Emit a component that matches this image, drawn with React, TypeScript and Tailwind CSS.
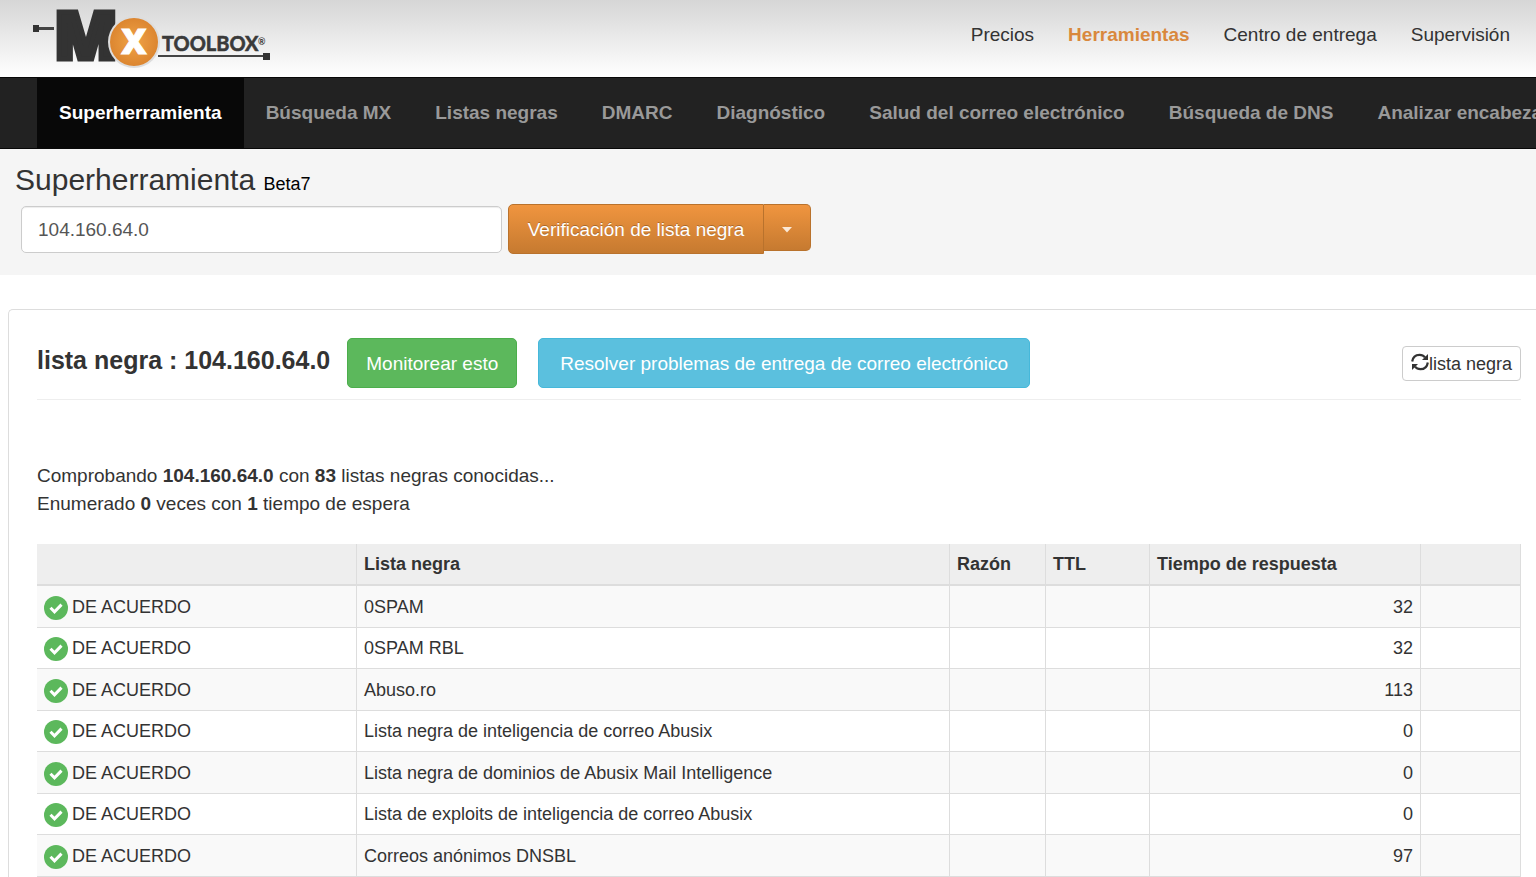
import { clsx } from 'clsx'

interface BlacklistRow {
  name: string
  time: number
}

const TOP_LINKS = ['Precios', 'Herramientas', 'Centro de entrega', 'Supervisión']

const TOOLS = [
  'Superherramienta',
  'Búsqueda MX',
  'Listas negras',
  'DMARC',
  'Diagnóstico',
  'Salud del correo electrónico',
  'Búsqueda de DNS',
  'Analizar encabezados',
]

const ROWS: BlacklistRow[] = [
  { name: '0SPAM', time: 32 },
  { name: '0SPAM RBL', time: 32 },
  { name: 'Abuso.ro', time: 113 },
  { name: 'Lista negra de inteligencia de correo Abusix', time: 0 },
  { name: 'Lista negra de dominios de Abusix Mail Intelligence', time: 0 },
  { name: 'Lista de exploits de inteligencia de correo Abusix', time: 0 },
  { name: 'Correos anónimos DNSBL', time: 97 },
]

function Logo() {
  return (
    <svg width="240" height="62" viewBox="0 0 240 62" role="img" aria-label="MxToolbox">
      <defs>
        <radialGradient id="ball" cx="50%" cy="50%" r="50%">
          <stop offset="0%" stopColor="#f0a347" />
          <stop offset="100%" stopColor="#dc8630" />
        </radialGradient>
      </defs>
      <rect x="0" y="17" width="6" height="7" fill="#333" />
      <rect x="6" y="19" width="15" height="3" fill="#444" />
      <text
        x="21"
        y="51"
        fontFamily="'Open Sans', sans-serif"
        fontWeight="800"
        fontSize="66"
        fill="#333"
        stroke="#333"
        strokeWidth="5"
      >
        M
      </text>
      <circle cx="101" cy="34" r="26" fill="#ddd" />
      <circle cx="101" cy="34" r="24" fill="url(#ball)" />
      <text
        x="101"
        y="46"
        textAnchor="middle"
        fontFamily="'Open Sans', sans-serif"
        fontWeight="800"
        fontSize="35"
        fill="#fff"
        stroke="#fff"
        strokeWidth="1"
      >
        X
      </text>
      <text x="129" y="43" fontFamily="Lato, sans-serif" fontWeight="700" fontSize="20" fill="#3a3a3a" stroke="#3a3a3a" strokeWidth="0.6">
        TOOLBOX
      </text>
      <text x="225" y="37" fontFamily="Lato, sans-serif" fontWeight="700" fontSize="9" fill="#3a3a3a">
        ®
      </text>
      <rect x="125" y="47" width="106" height="2" fill="#444" />
      <rect x="230" y="45" width="7" height="7" fill="#333" />
    </svg>
  )
}

function CheckIcon() {
  return (
    <svg width="24" height="24" viewBox="0 0 24 24" className="mt-[2px] shrink-0" aria-hidden="true">
      <circle cx="12" cy="12" r="12" fill="#5cb85c" />
      <path d="M6.5 11.8l4 4 7-7.2" fill="none" stroke="#fff" strokeWidth="3" />
    </svg>
  )
}

function RefreshIcon() {
  return (
    <svg width="18" height="18" viewBox="0 0 18 18" className="mb-1 shrink-0" aria-hidden="true">
      <g fill="none" stroke="#333" strokeWidth="2.2">
        <path d="M1.2 8.5C1.8 4 5 1.8 8.6 1.8c2.4 0 4.2 1 5.4 2.6" />
        <path d="M16.8 9.5C16.2 14 13 16.2 9.4 16.2c-2.4 0-4.2-1-5.4-2.6" />
      </g>
      <path d="M17 1v6h-6z" fill="#333" />
      <path d="M1 17v-6h6z" fill="#333" />
    </svg>
  )
}

function Header() {
  return (
    <header className="flex h-[77px] items-center justify-between bg-linear-to-b from-[#d6d6d6] to-white pr-[26px] pl-[33px]">
      <a href="#">
        <Logo />
      </a>
      <nav className="flex gap-[34px] pb-2">
        {TOP_LINKS.map((label) => (
          <a
            key={label}
            href="#"
            className={clsx(label === 'Herramientas' ? 'font-bold text-[#d9883d]' : 'text-[#333]')}
          >
            {label}
          </a>
        ))}
      </nav>
    </header>
  )
}

function ToolNav() {
  return (
    <nav className="flex h-[72px] overflow-hidden border-y border-[#080808] bg-[#222] pl-[37px]">
      {TOOLS.map((label, i) => (
        <a
          key={label}
          href="#"
          className={clsx(
            'flex shrink-0 items-center px-[22px] font-bold',
            i === 0 ? 'bg-[#080808] text-white' : 'text-[#999]',
          )}
        >
          {label}
        </a>
      ))}
    </nav>
  )
}

function SearchBar() {
  return (
    <section className="h-[126px] bg-[#f5f5f5] pt-3 pl-[15px]">
      <h1 className="text-[30px] leading-[38px] text-[#333]">
        Superherramienta <small className="text-[18px] text-black">Beta7</small>
      </h1>
      <form className="mt-px flex items-start pl-[6px]" onSubmit={(e) => e.preventDefault()}>
        <input
          type="text"
          aria-label="Superherramienta"
          defaultValue="104.160.64.0"
          className="mt-[2px] mr-[6px] h-[47px] w-[481px] rounded-[5px] border border-[#ccc] bg-white px-4 text-[#555] shadow-[inset_0_1px_1px_rgba(0,0,0,0.075)]"
        />
        <button
          type="submit"
          className="h-[50px] w-[256px] rounded-l-[5px] border border-[#b9722c] bg-linear-to-b from-[#f0953f] to-[#c67a30] pt-[2px] text-white [text-shadow:0_-1px_0_rgba(0,0,0,0.25)]"
        >
          Verificación de lista negra
        </button>
        <button
          type="button"
          aria-label="Más opciones"
          className="flex h-[47px] w-[47px] items-center justify-center rounded-r-[5px] border border-l-0 border-[#b9722c] bg-linear-to-b from-[#f0953f] to-[#c67a30] pt-1"
        >
          <svg width="10" height="6" viewBox="0 0 10 6" aria-hidden="true">
            <path d="M0 0h10L5 5.5z" fill="#fbe9d7" />
          </svg>
        </button>
      </form>
    </section>
  )
}

function ResultTable() {
  const head = 'border-r border-b-2 border-[#ddd] px-[7px] text-left font-bold'
  const cell = 'border-r border-b border-[#ddd] px-[7px]'

  return (
    <table className="mt-[26px] w-full table-fixed border-separate border-spacing-0 text-[18px] text-[#333]">
      <colgroup>
        <col className="w-[320px]" />
        <col />
        <col className="w-[96px]" />
        <col className="w-[104px]" />
        <col className="w-[271px]" />
        <col className="w-[100px]" />
      </colgroup>
      <thead>
        <tr className="h-[42px] bg-[#eee]">
          <th className={head} aria-label="Estado" />
          <th className={head}>Lista negra</th>
          <th className={head}>Razón</th>
          <th className={head}>TTL</th>
          <th className={head}>Tiempo de respuesta</th>
          <th className={head} aria-label="Acciones" />
        </tr>
      </thead>
      <tbody>
        {ROWS.map((row) => (
          <tr key={row.name} className="odd:h-[42px] odd:bg-[#f9f9f9] even:h-[41px]">
            <td className={cell}>
              <div className="flex items-center gap-1">
                <CheckIcon />
                DE ACUERDO
              </div>
            </td>
            <td className={cell}>{row.name}</td>
            <td className={cell} />
            <td className={cell} />
            <td className={clsx(cell, 'text-right')}>{row.time}</td>
            <td className={cell} />
          </tr>
        ))}
      </tbody>
    </table>
  )
}

export default function App() {
  return (
    <div className="overflow-hidden bg-white font-['Liberation_Sans',Arial,sans-serif] text-[19px] leading-7">
      <Header />
      <ToolNav />
      <SearchBar />
      <main className="mt-[34px] ml-2 rounded-tl-[5px] border-t border-l border-[#ddd] pt-7 pr-[15px] pl-7 text-[#333]">
        <div className="flex items-start border-b border-[#eee] pb-[11px]">
          <h2 className="mt-2 mr-[17px] text-[25px] font-bold">lista negra : 104.160.64.0</h2>
          <button type="button" className="mr-[21px] h-[50px] rounded-[5px] border border-[#4cae4c] bg-[#5cb85c] px-[18px] pt-[2px] text-white">
            Monitorear esto
          </button>
          <button type="button" className="h-[50px] rounded-[5px] border border-[#46b8da] bg-[#5bc0de] px-[21px] pt-[2px] text-white">
            Resolver problemas de entrega de correo electrónico
          </button>
          <button type="button" className="mt-2 ml-auto flex h-[35px] items-center rounded-[4px] border border-[#ccc] bg-white px-2 text-[18px]">
            <RefreshIcon />
            lista negra
          </button>
        </div>
        <p className="mt-[62px]">
          Comprobando <b>104.160.64.0</b> con <b>83</b> listas negras conocidas...
          <br />
          Enumerado <b>0</b> veces con <b>1</b> tiempo de espera
        </p>
        <ResultTable />
      </main>
    </div>
  )
}
